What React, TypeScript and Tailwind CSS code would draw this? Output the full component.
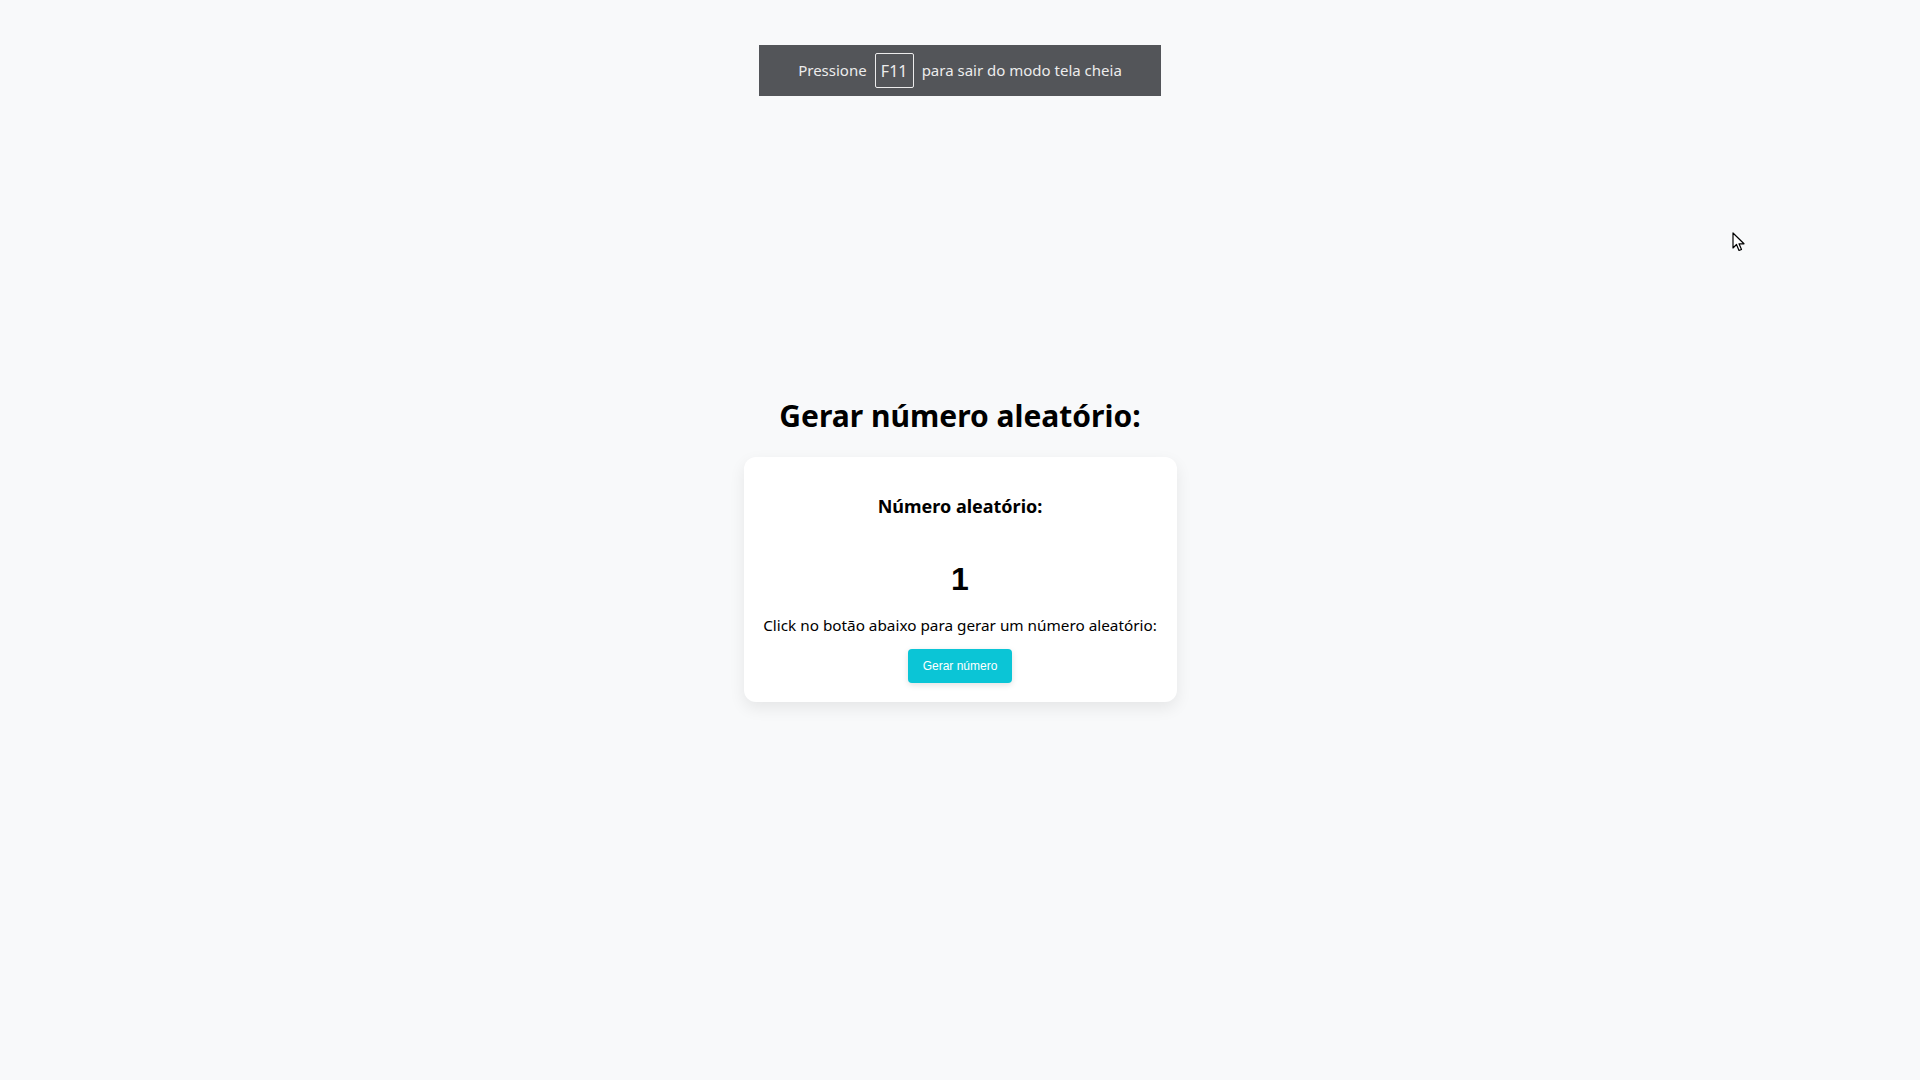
import { useState } from 'react'

const Cursor = () => (
    <svg width="14" height="20" viewBox="0 0 14 20" className="absolute left-[1732px] top-[232px]">
        <path d="M1 1 L1 16 L4.5 12.5 L7 18.5 L9.5 17.5 L7 11.8 L12 11.8 Z" fill="#fff" stroke="#000" strokeWidth="1.2" strokeLinejoin="round" />
    </svg>
)

export default function App() {
    const [numero, setNumero] = useState(1)

    const gerar = () => setNumero(Math.floor(Math.random() * 100) + 1)

    return (
        <div className="relative min-h-screen bg-[#f8f9fa] font-['Noto_Sans',sans-serif] text-black">
            {/* aviso do navegador */}
            <div className="absolute left-1/2 top-[45px] -translate-x-1/2 w-[402px] h-[51px] bg-[#535559] flex items-center justify-center gap-[8px] text-[15px] text-[#ececec]">
                <span>Pressione</span>
                <span className="border border-[#ececec] rounded-[2px] h-[35px] w-[39px] flex items-center justify-center text-[16px]">F11</span>
                <span>para sair do modo tela cheia</span>
            </div>

            <Cursor />

            <main className="flex flex-col items-center pt-[396px]">
                <h1 className="text-[30px] leading-[40px] font-bold">Gerar número aleatório:</h1>

                <div className="mt-[21px] w-[433px] bg-white rounded-[12px] shadow-[0_6px_16px_rgba(0,0,0,0.08)] flex flex-col items-center px-[12px] pt-[37px] pb-[19px]">
                    <h3 className="text-[18px] leading-[24px] font-bold">Número aleatório:</h3>
                    <div className="mt-[45px] text-[32px] leading-[32px] font-bold font-['Liberation_Sans',Arial,sans-serif]">{numero}</div>
                    <p className="mt-[18px] text-[15.3px] leading-[24px] whitespace-nowrap">Click no botão abaixo para gerar um número aleatório:</p>
                    <button
                        onClick={gerar}
                        className="mt-[12px] w-[104px] h-[34px] rounded-[4px] bg-[#0bc5d6] text-white text-[12px] font-['Liberation_Sans',Arial,sans-serif] shadow-[0_2px_6px_rgba(0,0,0,0.12)]"
                    >
                        Gerar número
                    </button>
                </div>
            </main>
        </div>
    )
}
